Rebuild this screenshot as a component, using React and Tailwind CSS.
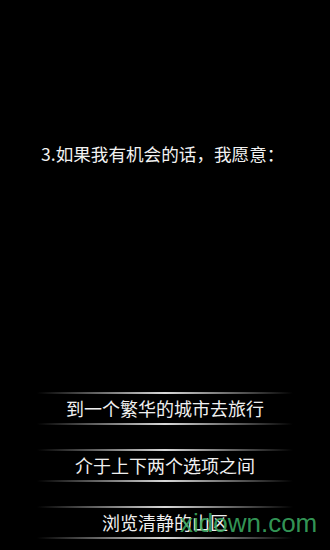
import React from 'react'

const options = ['到一个繁华的城市去旅行', '介于上下两个选项之间', '浏览清静的山区']

const Line = () => (
  <div className="h-[2px] w-full bg-gradient-to-r from-transparent via-[#d8d8d8] to-transparent" />
)

export default function App() {
  return (
    <div
      className="relative w-[330px] h-[550px] bg-black text-white overflow-hidden"
      style={{ fontFamily: '"Noto Sans CJK SC", "Liberation Sans", sans-serif' }}
    >
      <div className="pt-[142px] pl-[41px] text-[17.6px] leading-[24px] text-[#f2f2f2]">
        3.如果我有机会的话，我愿意：
      </div>
      <div className="mt-[226px] flex flex-col gap-[24px] px-[37px]">
        {options.map((o) => (
          <div key={o} className="flex flex-col">
            <Line />
            <div className="h-[29px] flex items-center justify-center text-[18px] text-[#f0f0f0]">{o}</div>
            <Line />
          </div>
        ))}
      </div>
      <div className="absolute left-[180px] top-[505px] text-[26px] leading-[36px] text-[#3aa860]/90" style={{ fontFamily: '"Liberation Sans", sans-serif' }}>
        xidown.com
      </div>
    </div>
  )
}
